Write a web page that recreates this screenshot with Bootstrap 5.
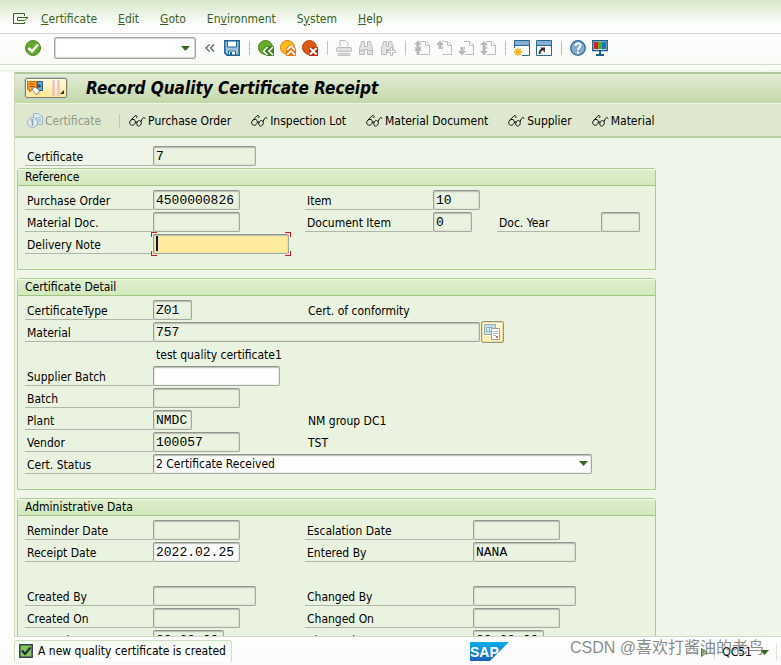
<!DOCTYPE html>
<html lang="en">
<head>
<meta charset="utf-8">
<meta name="viewport" content="width=device-width, initial-scale=1">
<title>Record Quality Certificate Receipt</title>
<link href="https://cdn.jsdelivr.net/npm/bootstrap@5.3.0/dist/css/bootstrap.min.css" rel="stylesheet">
<style>
body{font:12px/18px "DejaVu Sans Condensed","DejaVu Sans",Tahoma,sans-serif;color:#000;background:#fff}
button,input,select{font:inherit;color:inherit}
button{border:0;background:none;padding:0}
svg{display:block;flex:none}
.menu-strip{height:34px;gap:21px;padding:4px 13px 0;background:linear-gradient(#d7e8c9,#fff 26px);border-bottom:1px solid #d2d7cc}
.menu-strip a{color:#36641c;text-decoration:none}
.menu-strip .menu-icon{margin-right:-9px}
.tool-strip{height:31px;padding:0 0 2px 22px;background:linear-gradient(#fff,#f7fbf4);border-bottom:1px solid #cfdcc8}
.tool{width:22px;height:22px;display:flex;align-items:center;justify-content:center}
.divider{width:12px;height:14px;display:flex;justify-content:center}
.divider::before{content:"";width:1px;background:#b4d592}
.command{width:142px;height:22px;margin:0 3px 0 10px;border:1px solid #a0a59d;box-shadow:inset 0 0 1px 1px #d3d6d0;border-radius:2px;background:#fff}
.command input{min-width:0;border:0;outline:0;background:none}
.command button{width:22px}
.work{margin-left:14px;border-left:1px solid #cbdcb9;background:#eff5e9}
.spacer-strip{height:7px;background:linear-gradient(#fff,#eaf5e3);flex:none}
.title-strip{height:32px;padding:0 0 2px 10px;border-top:2px solid #b1c79f;background:linear-gradient(#e3edd6,#cfe0ba 60%,#c1d8a8);border-bottom:1px solid #edf4e4}
.title-strip h1{font-size:17px;line-height:22px;font-weight:700;font-style:italic;margin:0 0 0 19px}
.title-button{width:42px;height:20px;border:1px solid #857f70;outline:1px solid #b8cbd2;border-radius:2px;background:linear-gradient(#fffbdc,#ffe690)}
.action-strip{height:34px;gap:20px;padding:1px 12px 0;background:#dee8cf;border-bottom:2px solid #b9cfa8}
.action-strip button{display:flex;align-items:center;gap:2px;white-space:nowrap}
.action-strip .off{color:#8f998a}
.action-strip .divider{width:1px;margin:0 -11px 0 -2px}
.scroll-area{overflow:hidden;min-height:0;border-bottom:1px solid #d0dbc8;padding:8px 2px 0}
.panel{max-width:639px;border:1px solid #a8cd8d;border-radius:3px 3px 0 0;background:#eaf3df;padding-bottom:13px;margin:0 0 8px}
.panel h2{font-size:12px;line-height:16px;font-weight:400;margin:0 0 4px;padding-left:7px;height:17px;border-bottom:1px solid #9fc482;box-shadow:inset 0 1px #f3faea;background:linear-gradient(#dfeecf,#d2e9bc)}
.line{display:grid;grid-template-columns:128px 152px 128px 64px 104px 1fr;height:22px;align-items:start;padding-left:7px}
.line.outer{padding-left:8px}
.line.admin{grid-template-columns:128px 152px 168px 1fr}
.line.long{grid-template-columns:128px 1fr}
.line label{height:20px;line-height:22px;padding-left:2px;border-bottom:1px solid #b1b7aa;white-space:nowrap}
.line output{padding-left:3px;line-height:22px;white-space:nowrap}
.box{height:20px;border:1px solid #a5aaa0;border-top-color:#91958d;border-left-color:#999d95;border-radius:2px;box-shadow:inset 0 1px 1px #b9beb3,inset 0 0 2px #c3c8be;background:#eaf3df;padding:1px 0 0 2px;font:13px/17px "Liberation Mono",monospace;outline:0}
.edit{background:#fff}
.w4{width:39px}.w5{width:47px}.w8{width:71px}.w10{width:87px}.w12{width:103px}.w15{width:127px}.w16{width:136px}.w40{width:327px}
.hot{position:relative;width:136px}
.hot .box{background:#ffeb9c}
.hot i{position:absolute;width:6px;height:5px;border:0 solid #d81920}
.hot .tl{left:-2px;top:-2px;border-width:1px 0 0 1px}
.hot .tr{right:-2px;top:-2px;border-width:1px 1px 0 0}
.hot .bl{left:-2px;bottom:-2px;border-width:0 0 1px 1px}
.hot .br{right:-2px;bottom:-2px;border-width:0 1px 1px 0}
.hot .caret{left:3px;top:2px;width:2px;height:15px;background:#0a1450}
.choice{position:relative;max-width:439px;height:20px}
.choice select{appearance:none;width:100%;font:inherit;line-height:16px;padding-top:0}
.choice svg{position:absolute;right:4px;top:7px;pointer-events:none}
.lookup{width:23px;height:22px;margin:-1px 0 0 1px;display:flex;align-items:center;justify-content:center;border:1px solid #97947f;border-radius:2px;background:linear-gradient(#fffbe6,#ffedb2);box-shadow:inset 0 0 0 1px #f2dc9c}
.status-strip{height:28px;position:relative;padding-left:14px;background:linear-gradient(#fff,#fbfbfb)}
.message{height:23px;padding:0 5px 0 4px;gap:5px;border:1px solid #cfe1c1;border-bottom-color:#f5faf0;border-radius:3px;background:linear-gradient(#f4faef,#fff)}
.logo{margin-left:238px}
.session{margin-left:auto;padding-right:4px;padding-top:2px}
.session .edge{width:1px;height:16px;background:#d7e2cf;margin-left:7px}
.session .code{margin-left:7px}
.watermark{position:absolute;right:17px;top:0;font:16px/22px "Liberation Sans","Noto Sans CJK SC",sans-serif;color:rgba(105,110,107,.8);white-space:nowrap}
</style>
<script src="https://cdn.jsdelivr.net/npm/bootstrap@5.3.0/dist/js/bootstrap.bundle.min.js"></script>
</head>
<body class="vh-100 d-flex flex-column overflow-hidden">
<svg width="0" height="0" class="position-absolute" aria-hidden="true">
<defs>
<symbol id="glasses" viewBox="0 0 17 14"><g fill="none" stroke="#111"><path d="M5 5.500C2 5 .500 7 .700 9c.3 2.500 3 2.800 4.500 1.500S7 6.500 5 5.500M1.500 6.500 6 1.800Q7.500 .800 8 2.500L7.500 4M6.300 8.500Q7.500 7.200 8.300 8.500"/><path d="M10.500 6.500c-2 0-3 2-2.700 4 .4 2 2.600 2 3.800.5s1-4-1.100-4.500M11.800 8 13.500 4.500Q14.500 2.500 16.300 4.500"/></g></symbol>
<symbol id="page" viewBox="0 0 16 16"><path d="M6 1.500h6l3.500 3.500v9.500h-9M11.500 1.500V5.500h4M6.500 6.500v3" fill="none" stroke="#bcc0bb"/></symbol>
<symbol id="down" viewBox="0 0 9 5"><path d="M0 0h9L4.500 5z" fill="#376823"/></symbol>
</defs></svg>

<nav class="menu-strip d-flex align-items-center flex-shrink-0" aria-label="Menu">
<button class="menu-icon" aria-label="Menu"><svg width="16" height="12" viewBox="0 0 16 12" fill="none" stroke="#36641c"><path d="M11.500 3V.5H.5v10h11V9M4.500 7.500v-3h10.500L11.500 7.500H4.500"/></svg></button>
<a href="#"><u>C</u>ertificate</a><a href="#"><u>E</u>dit</a><a href="#"><u>G</u>oto</a><a href="#">En<u>v</u>ironment</a><a href="#">S<u>y</u>stem</a><a href="#"><u>H</u>elp</a>
</nav>

<div class="tool-strip d-flex align-items-center flex-shrink-0" role="toolbar" aria-label="Standard">
<button class="tool" aria-label="Enter"><svg width="16" height="16" viewBox="0 0 16 16"><circle cx="8" cy="8" r="7.500" fill="#62a82c" stroke="#55882c"/><path d="m3.500 8 3.500 3.500 6-7" fill="none" stroke="#fff" stroke-width="2.500"/></svg></button>
<div class="command d-flex"><input class="flex-grow-1" aria-label="Command"><button aria-label="History"><svg class="mx-auto" width="9" height="5"><use href="#down"/></svg></button></div>
<button class="tool" aria-label="Hide"><svg width="10" height="8" viewBox="0 0 10 8" fill="none" stroke="#555" stroke-width="1.200"><path d="M4.500.5 1 4l3.500 3.500M9 .5 5.500 4 9 7.500"/></svg></button>
<button class="tool" aria-label="Save"><svg width="16" height="16" viewBox="0 0 16 16"><path d="M.8.8h14.400v14.400H3L.8 13z" fill="#a7c4df" stroke="#17649b" stroke-width="1.500"/><path d="M3.500 1h9v6h-9z" fill="#fff" stroke="#17649b"/><path d="M4.500 11h7v4h-7z" fill="#fff" stroke="#17649b"/><path d="M6 12h2v3H6z" fill="#17649b"/></svg></button>
<span class="divider"></span>
<button class="tool" aria-label="Back"><svg width="16" height="16" viewBox="0 0 16 16"><circle cx="7.500" cy="7.500" r="7" fill="#67ab29" stroke="#3f821f"/><path d="M4 10.500 8 6h8v10H8z" fill="#3f821f"/><path d="m9.500 7-4 4 4 4m5.500-8-4 4 4 4" fill="none" stroke="#fff" stroke-width="1.600"/></svg></button>
<button class="tool" aria-label="Exit"><svg width="16" height="16" viewBox="0 0 16 16"><circle cx="7.500" cy="7.500" r="7" fill="#ffbd16" stroke="#e07818"/><path d="M6 8.500 10.500 4 16 8.500V16H6z" fill="#e07818"/><path d="m7 10 4-4 4 4m-8 5 4-4 4 4" fill="none" stroke="#fff" stroke-width="1.600"/></svg></button>
<button class="tool" aria-label="Cancel"><svg width="16" height="16" viewBox="0 0 16 16"><circle cx="7.500" cy="7.500" r="7" fill="#dc5a16" stroke="#b94110"/><path d="M7 7h9v9H7z" fill="#b3300f"/><path d="m8 8 6.500 6.500m0-6.500L8 14.500" stroke="#fff" stroke-width="2"/></svg></button>
<span class="divider"></span>
<button class="tool" aria-label="Print"><svg width="16" height="16" viewBox="0 0 16 16" fill="#dfe2de" stroke="#b8bcb7"><path d="M4 6.500V.5h5.500L12 3v3.500" fill="#fafbf9"/><rect x=".5" y="7.500" width="15" height="4" rx="1"/><path d="M2.500 13.500h11v2h-11z"/></svg></button>
<button class="tool" aria-label="Find"><svg width="16" height="16" viewBox="0 0 16 16" fill="#e0e3df" stroke="#b8bcb7"><path d="M3.500 1.500h3v5h3v-5h3l2 7v6h-5v-5h-3v5h-5v-6z"/><path d="M1.500 10.500h5m3 0h5"/></svg></button>
<button class="tool" aria-label="Find next"><svg width="16" height="16" viewBox="0 0 16 16" fill="#e0e3df" stroke="#b8bcb7"><path d="M3.500 1.500h3v5h2v-5h3l2 7v4h-5v-3h-2v5h-5v-6z"/><path d="M10.500 7.500h2v3h3v2h-3v3h-2v-3h-3v-2h3z" fill="#fff"/></svg></button>
<span class="divider"></span>
<button class="tool" aria-label="First page"><svg width="16" height="16"><use href="#page"/><path d="m0 4.500 4-4 4 4H5.500v3H8l-4 4-4-4h2.500v-3zM0 11l4-3.500L8 11H5.500v4h-3v-4z" fill="#b6bab5"/></svg></button>
<button class="tool" aria-label="Previous page"><svg width="16" height="16"><use href="#page"/><path d="m0 5 4-4.500L8 5H5.500v4h-3V5z" fill="#b6bab5"/></svg></button>
<button class="tool" aria-label="Next page"><svg width="16" height="16"><use href="#page"/><path d="m0 11 4 4.500L8 11H5.500V7h-3v4z" fill="#b6bab5"/></svg></button>
<button class="tool" aria-label="Last page"><svg width="16" height="16"><use href="#page"/><path d="m0 5 4-4 4 4H5.500v6H8l-4 4.500L0 11h2.500V5z" fill="#b6bab5"/></svg></button>
<span class="divider"></span>
<button class="tool" aria-label="New session"><svg width="16" height="16" viewBox="0 0 16 16"><path d="M.5.5h15v15H.5z" fill="#fff" stroke="#246996"/><path d="M1 1h14v4H1z" fill="#86aed4"/><path d="M1 5.500h14" stroke="#246996"/><path d="M0 8h8v8H0z" fill="#fff"/><path d="M4 7.500v9M-.5 12h9M1 9l6 6m0-6-6 6" stroke="#efa21a" stroke-width="1.300"/><circle cx="4" cy="12" r="2.500" fill="#f7b315"/></svg></button>
<button class="tool" aria-label="Shortcut"><svg width="16" height="16" viewBox="0 0 16 16"><path d="M.5.500h15v15H.5z" fill="#fff" stroke="#246996"/><path d="M1 1h14v4H1z" fill="#86aed4"/><path d="M1 5.500h14" stroke="#246996"/><path d="M3.500 14c0-3 1-4 3.500-5" fill="none" stroke="#333" stroke-width="2"/><path d="M4 7.500h5v5z" fill="#333"/></svg></button>
<span class="divider"></span>
<button class="tool" aria-label="Help"><svg width="16" height="16" viewBox="0 0 16 16"><circle cx="8" cy="8" r="7.300" fill="#82abd0" stroke="#286b99" stroke-width="1.300"/><path d="M5.500 6c0-3.500 5-3.500 5-.5C10.500 7.500 8 7.500 8 10m0 1.500v2" fill="none" stroke="#fff" stroke-width="1.800"/></svg></button>
<button class="tool" aria-label="Layout"><svg width="16" height="16" viewBox="0 0 16 16"><path d="M.8.8h14.400v9.700H.8z" fill="#fff" stroke="#195e87" stroke-width="1.500"/><path d="M2 2h4v7H2z" fill="#d61d22"/><path d="M6 2h4v7H6z" fill="#5aad25"/><path d="M10 2h4v7h-4z" fill="#1478c0"/><path d="M8 11v3m-4 1h8" stroke="#195e87" stroke-width="2"/></svg></button>
</div>
<div class="spacer-strip"></div>

<main class="work flex-grow-1 d-flex flex-column overflow-hidden">
<header class="title-strip d-flex align-items-center flex-shrink-0">
<button class="title-button d-flex align-items-center" aria-label="Services for object"><svg width="40" height="16" viewBox="0 0 40 16"><path d="M1.500 1.500h9v8H6.500L3.500 12V9.500h-2z" fill="#f6a12a" stroke="#d66a13"/><path d="M3.500 4h5M3.500 6.500h5" stroke="#a44a11"/><path d="M11.500 1.500h5v9h-5z" fill="#63a6d0" stroke="#205f8a"/><path d="M12.500 4v4l3-2z" fill="#123f65"/><path d="m6 9 3-2 4 3v3l-3 1.500z" fill="#fff" stroke="#80725f" stroke-width=".8"/><path d="M27.500 0v16m5-16v16" stroke="#e2b5d2" stroke-width="2"/><path d="M38 10v4h-4z" fill="#2d3512"/></svg></button>
<h1>Record Quality Certificate Receipt</h1>
</header>
<div class="action-strip d-flex align-items-center flex-shrink-0" role="toolbar" aria-label="Application">
<button class="off" disabled><svg width="16" height="16" viewBox="0 0 16 16"><path d="M6.500.5h5l4 3v8h-9z" fill="#dce8f1" stroke="#9cb5c9"/><path d="M9 5h5M9 7h5M9 9h5" stroke="#9cb5c9"/><circle cx="5.500" cy="9.500" r="5" fill="#e1e8ea" stroke="#98b0c2"/><path d="M5.500 6v7M4 7.500 5.500 6" fill="none" stroke="#8aa5b8" stroke-width="1.500"/></svg>Certificate</button>
<span class="divider"></span>
<button><svg width="17" height="14"><use href="#glasses"/></svg>Purchase Order</button>
<button><svg width="17" height="14"><use href="#glasses"/></svg>Inspection Lot</button>
<button><svg width="17" height="14"><use href="#glasses"/></svg>Material Document</button>
<button><svg width="17" height="14"><use href="#glasses"/></svg>Supplier</button>
<button><svg width="17" height="14"><use href="#glasses"/></svg>Material</button>
</div>

<form class="scroll-area flex-grow-1">
<div class="line outer"><label for="cert">Certificate</label><input id="cert" class="box w12" value="7" readonly></div>

<section class="panel"><h2>Reference</h2>
<div class="line"><label for="po">Purchase Order</label><input id="po" class="box w10" value="4500000826" readonly><label for="item">Item</label><input id="item" class="box w5" value="10" readonly></div>
<div class="line"><label for="md">Material Doc.</label><input id="md" class="box w10" readonly><label for="di">Document Item</label><input id="di" class="box w4" value="0" readonly><label for="dy">Doc. Year</label><input id="dy" class="box w4" readonly></div>
<div class="line"><label for="dn">Delivery Note</label><div class="hot"><input id="dn" class="box w16 d-block"><i class="tl"></i><i class="tr"></i><i class="bl"></i><i class="br"></i><i class="caret"></i></div></div>
</section>

<section class="panel"><h2>Certificate Detail</h2>
<div class="line"><label for="ct">CertificateType</label><input id="ct" class="box w4" value="Z01" readonly><output for="ct">Cert. of conformity</output></div>
<div class="line long"><label for="mat">Material</label><div class="d-flex"><input id="mat" class="box w40" value="757" readonly><button type="button" class="lookup" aria-label="Display material"><svg width="17" height="16" viewBox="0 0 17 16"><path d="M.5.500h11v10H.5z" fill="#c7dfe5" stroke="#93adb6"/><path d="M2.500 3.500h6v4h-6zM5.500 3.500v4" fill="#e8f2f4" stroke="#86b1c6"/><path d="M7.500 4.500h8v11h-8z" fill="#fff" stroke="#a1a29d"/><path d="M9 7.500h5M9 9.500h5M9 11.500h3" stroke="#b5b6b1"/><path d="M12 12h2v2h-2z" fill="#dd6b62"/></svg></button></div></div>
<div class="line long"><span></span><output for="mat">test quality certificate1</output></div>
<div class="line"><label for="sb">Supplier Batch</label><input id="sb" class="box edit w15"></div>
<div class="line"><label for="ba">Batch</label><input id="ba" class="box w10" readonly></div>
<div class="line"><label for="pl">Plant</label><input id="pl" class="box w4" value="NMDC" readonly><output for="pl">NM group DC1</output></div>
<div class="line"><label for="ve">Vendor</label><input id="ve" class="box w10" value="100057" readonly><output for="ve">TST</output></div>
<div class="line long"><label for="cs">Cert. Status</label><div class="choice"><select id="cs" class="box edit"><option>2 Certificate Received</option></select><svg width="9" height="5"><use href="#down"/></svg></div></div>
</section>

<section class="panel"><h2>Administrative Data</h2>
<div class="line admin"><label for="rd">Reminder Date</label><input id="rd" class="box w10" readonly><label for="ed">Escalation Date</label><input id="ed" class="box w10" readonly></div>
<div class="line admin"><label for="rc">Receipt Date</label><input id="rc" class="box edit w10" value="2022.02.25"><label for="eb">Entered By</label><input id="eb" class="box w12" value="NANA" readonly></div>
<div class="line"></div>
<div class="line admin"><label for="cb">Created By</label><input id="cb" class="box w12" readonly><label for="hb">Changed By</label><input id="hb" class="box w12" readonly></div>
<div class="line admin"><label for="co">Created On</label><input id="co" class="box w10" readonly><label for="ho">Changed On</label><input id="ho" class="box w10" readonly></div>
<div class="line admin"><label for="ca">Created At</label><input id="ca" class="box w8" value="00:00:00" readonly><label for="ha">Changed At</label><input id="ha" class="box w8" value="00:00:00" readonly></div>
</section>
</form>
</main>

<footer class="status-strip d-flex align-items-center flex-shrink-0">
<div class="message d-flex align-items-center" role="status"><svg width="14" height="14" viewBox="0 0 14 14"><path d="M.8.8h12.400v12.400H.8z" fill="#84c65c" stroke="#34404a" stroke-width="1.500"/><path d="m3 6.500 3 3.500 5.500-6.500" fill="none" stroke="#1d2a3a" stroke-width="2"/></svg>A new quality certificate is created</div>
<svg class="logo" width="39" height="19" viewBox="0 0 39 19" role="img" aria-label="SAP"><defs><linearGradient id="sap" x2="0" y2="1"><stop stop-color="#0aaeea"/><stop offset="1" stop-color="#1c61bb"/></linearGradient></defs><path d="M0 0h39L20 19H0z" fill="url(#sap)"/><text x="0" y="15" font-family="Liberation Sans,sans-serif" font-weight="700" font-size="14" fill="#fff">SAP</text></svg>
<div class="session d-flex align-items-center"><svg width="6" height="9" viewBox="0 0 6 9"><path d="M.5.5 5.500 4.500l-5 4z" fill="#b8d49c" stroke="#4c7c31"/></svg><span class="edge"></span><span class="code">QC51</span><svg class="ms-2" width="9" height="5"><use href="#down"/></svg><span class="edge"></span></div>
<div class="watermark">CSDN @喜欢打酱油的老鸟</div>
</footer>
</body>
</html>
